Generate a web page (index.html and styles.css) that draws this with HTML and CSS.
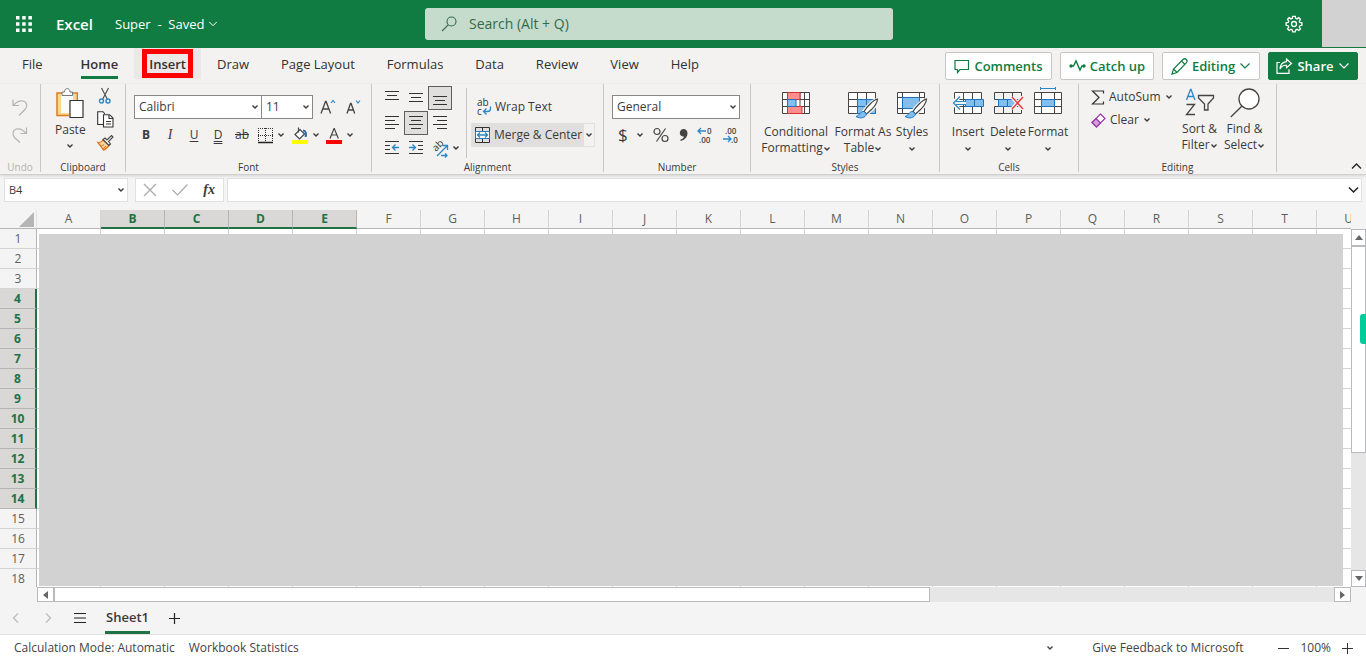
FILE: index.html
```html
<!DOCTYPE html>
<html lang="en">
<head>
<meta charset="utf-8">
<meta name="viewport" content="width=device-width, initial-scale=1">
<title>Super - Excel</title>
<link rel="stylesheet" href="styles.css">
</head>
<body>
<svg class="defs" aria-hidden="true">
  <symbol id="chev" viewBox="0 0 8 6"><path d="M1.500 1.500 4 4l2.500-2.500" fill="none" stroke="currentColor" stroke-width="1.400"/></symbol>
  <symbol id="chev-lg" viewBox="0 0 12 8"><path d="M1.500 1.500 6 6l4.500-4.500" fill="none" stroke="currentColor" stroke-width="1.200"/></symbol>
</svg>

<header class="topbar">
  <button class="plain waffle" aria-label="App launcher">
    <svg width="16" height="16" viewBox="0 0 16 16" fill="#fff"><path d="M0 0h3.500v3.500H0zM6.200 0h3.500v3.500H6.200zM12.400 0h3.500v3.500h-3.500zM0 6.200h3.500v3.500H0zM6.200 6.200h3.500v3.500H6.200zM12.400 6.200h3.500v3.500h-3.500zM0 12.400h3.500v3.500H0zM6.200 12.400h3.500v3.500H6.200zM12.400 12.400h3.500v3.500h-3.500z"/></svg>
  </button>
  <span class="brand">Excel</span>
  <button class="plain filename">Super&nbsp; -&nbsp; Saved <svg width="10" height="8"><use href="#chev-lg"/></svg></button>
  <label class="search">
    <svg width="16" height="16" viewBox="0 0 16 16" fill="none" stroke="#35694a" stroke-width="1.100"><circle cx="10.500" cy="5.500" r="4.500"/><path d="M7.200 8.800 1 15"/></svg>
    <input type="text" placeholder="Search (Alt + Q)" aria-label="Search">
  </label>
  <button class="plain gear" aria-label="Settings">
    <svg width="18" height="18" viewBox="0 0 18 18" fill="none" stroke="#fff" stroke-width="1.300"><path d="M7.700 1.300h2.600l.4 2 1.300.6 1.800-1.200 1.700 1.700-1.200 1.800.6 1.300 2 .3v2.500l-2 .4-.6 1.300 1.200 1.800-1.700 1.700-1.800-1.200-1.300.6-.4 2H7.700l-.4-2-1.300-.6-1.800 1.200-1.700-1.700 1.200-1.800-.6-1.300-2-.4V7.800l2-.3.6-1.300-1.200-1.800 1.700-1.700L6 3.900l1.300-.6z"/><circle cx="9" cy="9" r="2.500"/></svg>
  </button>
  <div class="account"></div>
</header>

<div class="tabrow">
  <nav class="tabs" aria-label="Ribbon tabs">
    <button class="tab tab-file">File</button>
    <button class="tab tab-active">Home</button>
    <button class="tab tab-hover">Insert</button>
    <button class="tab">Draw</button>
    <button class="tab">Page Layout</button>
    <button class="tab">Formulas</button>
    <button class="tab">Data</button>
    <button class="tab">Review</button>
    <button class="tab">View</button>
    <button class="tab">Help</button>
  </nav>
  <div class="actions">
    <button class="action"><svg width="16" height="16" viewBox="0 0 16 16" fill="none" stroke="currentColor" stroke-width="1.200"><path d="M1 2.500h13.500v9H6L3.500 14.500v-3H1z"/></svg>Comments</button>
    <button class="action action-catch"><svg width="17" height="14" viewBox="0 0 17 14" fill="none" stroke="currentColor" stroke-width="1.400"><path d="M2 7h2.500L7 2l4 9 2-4h2"/><circle cx="2" cy="7" r="1" fill="currentColor"/><circle cx="15" cy="7" r="1" fill="currentColor"/></svg>Catch up</button>
    <button class="action action-edit"><svg width="17" height="17" viewBox="0 0 17 17" fill="none" stroke="currentColor" stroke-width="1.200"><path d="m1 16 1.500-5L12 1.500c1-1 2.500-.8 3.300 0s1 2.300 0 3.300L6 14.500zM2.500 11 6 14.500M10.500 3l3.500 3.500"/></svg>Editing<svg class="end" width="12" height="8"><use href="#chev-lg"/></svg></button>
    <button class="action action-share"><svg width="17" height="16" viewBox="0 0 17 16" fill="none" stroke="currentColor" stroke-width="1.200"><path d="M4 4.500H1v10.800h12v-4"/><path d="M10.500 1 15.500 5.500l-5 4.200V7.300C7.500 7 5.500 8.300 4 11c.3-4 2.500-7 6.500-7.400z"/></svg>Share<svg class="end" width="12" height="8"><use href="#chev-lg"/></svg></button>
  </div>
</div>

<div class="ribbon">
  <section class="group g-undo">
    <div class="content undo">
      <button class="plain" aria-label="Undo"><svg width="16" height="18" viewBox="0 0 16 18" fill="none" stroke="#b5b3b1" stroke-width="1.200"><path d="M1 1.500v6h6M1.500 7.500C4 4 7.500 2.500 11 3c4 1 5 5.500 2 8.500l-6 6"/></svg></button>
      <button class="plain" aria-label="Redo"><svg width="16" height="18" viewBox="0 0 16 18" fill="none" stroke="#b5b3b1" stroke-width="1.200"><path d="M14.500 1.500v6h-6M14 7.500C11.500 4 8 2.500 4.500 3c-4 1-4.500 5.500-2 8.500l5.500 5"/></svg></button>
    </div>
    <h2 class="glabel muted">Undo</h2>
  </section>

  <section class="group g-clip">
    <div class="content clip">
      <button class="plain big">
        <svg width="28" height="31" viewBox="0 0 28 31" fill="none"><path d="M1.500 5.500h19V12h-7v15.500h-12z" fill="#f8d98b"/><path d="M5 6h12v6h-4v13H5z" fill="#fafafa"/><path d="M6 5H1v22.500h12M16.500 5h4.800v7" stroke="#e0791c" stroke-width="1.500"/><path d="M6 7.500V4h2.500C8.500-.5 14-.5 14 4h2.500v3.500z" fill="#fff" stroke="#777"/><path d="M14 12.500h13v17H14z" fill="#fff" stroke="#333" stroke-width="1.200"/></svg>
        <span>Paste</span>
        <svg class="lone" width="8" height="6"><use href="#chev"/></svg>
      </button>
      <div class="stack">
        <button class="plain" aria-label="Cut"><svg width="14" height="16" viewBox="0 0 14 16" fill="none"><path d="M3.500 0 9.500 11.500M10.500 0l-6 11.500" stroke="#555" stroke-width="1.200"/><circle cx="3.500" cy="13" r="2" stroke="#2b88c8" stroke-width="1.400"/><circle cx="10" cy="13" r="2" stroke="#2b88c8" stroke-width="1.400"/></svg></button>
        <button class="plain" aria-label="Copy"><svg width="17" height="17" viewBox="0 0 17 17" fill="#fff" stroke="#333" stroke-width="1.100"><path d="M6 13.500H.7V.7H6L8 3"/><path d="M6.500 3.700h6L16 7v9H6.500z"/><path d="M12 4v3.500h4M9 10.500h5M9 13h5" fill="none"/></svg></button>
        <button class="plain" aria-label="Format painter"><svg width="17" height="16" viewBox="0 0 17 16" fill="none"><path d="M1 7.500c3 .5 4-1 5-2.500l6 5.500c-1.500 1.500-3 4-5.500 4.500C5 13 3 10 1 7.500z" fill="#fbd5a0" stroke="#df7419" stroke-width="1.300"/><path d="m4 11.500 3-2M6 14l3-3" stroke="#df7419"/><path d="m6 4.500 6 6 1.500-1.500-2-2.500L16 2l-1.500-1.500L10 5 8 3z" fill="#fff" stroke="#444" stroke-width="1.100"/></svg></button>
      </div>
    </div>
    <h2 class="glabel">Clipboard</h2>
  </section>

  <section class="group g-font">
    <div class="content font">
      <div class="line">
        <div class="combo w-font"><select aria-label="Font"><option>Calibri</option></select><svg width="8" height="6"><use href="#chev"/></svg></div>
        <div class="combo w-size"><select aria-label="Font size"><option>11</option></select><svg width="8" height="6"><use href="#chev"/></svg></div>
        <button class="plain grow" aria-label="Increase font size"><svg width="16" height="16" viewBox="0 0 16 16" fill="none"><path d="m1 14.500 4.500-12h.6l4.500 12M2.700 10h6.300" stroke="#444" stroke-width="1.300"/><path d="M11 4l2-2.500L15 4" stroke="#2b88c8" stroke-width="1.200"/></svg></button>
        <button class="plain shrink" aria-label="Decrease font size"><svg width="16" height="16" viewBox="0 0 16 16" fill="none"><path d="m2 14.500 3.500-10h.6l3.600 10M3.300 11h5" stroke="#444" stroke-width="1.300"/><path d="M11 1.500 13 4l2-2.500" stroke="#2b88c8" stroke-width="1.200"/></svg></button>
      </div>
      <div class="line marks">
        <button class="plain mk"><b>B</b></button>
        <button class="plain mk"><i>I</i></button>
        <button class="plain mk mk-u">U</button>
        <button class="plain mk mk-d">D</button>
        <button class="plain mk mk-s">ab</button>
        <button class="plain pick" aria-label="Borders"><svg width="15" height="15" viewBox="0 0 15 15" fill="none" stroke="#333"><path d="M0 .5h15M0 7.500h15M.5 0v14M7.500 0v14M14.500 0v14" stroke-dasharray="1 1" shape-rendering="crispEdges"/><path d="M0 14.500h15" stroke="#222" stroke-width="1.500"/></svg><svg width="8" height="6"><use href="#chev"/></svg></button>
        <button class="plain pick" aria-label="Fill color"><svg width="16" height="17" viewBox="0 0 16 17" fill="none"><path d="m3 7.500 5-5 4.500 4.500-5 5zM6.500.5v5" stroke="#444" stroke-width="1.200" fill="#fff"/><path d="M11 3.500c3 0 3.500 3 2.500 6.500" stroke="#2b6cb0" stroke-width="2"/><path d="M0 13h16v4H0z" fill="#ff0"/></svg><svg width="8" height="6"><use href="#chev"/></svg></button>
        <button class="plain pick" aria-label="Font color"><svg width="16" height="17" viewBox="0 0 16 17" fill="none"><path d="M4 11.500 8 1.500h.3l4 10M5.500 8h5.300" stroke="#444" stroke-width="1.200"/><path d="M0 13h16v4H0z" fill="#f00"/></svg><svg width="8" height="6"><use href="#chev"/></svg></button>
      </div>
    </div>
    <h2 class="glabel">Font</h2>
  </section>

  <section class="group g-align">
    <div class="content align">
      <div class="aligns">
        <button class="plain sq" aria-label="Top align"><svg width="14" height="14"><path d="M0 .5h14M2 4.500h10M0 8.500h14"/></svg></button>
        <button class="plain sq" aria-label="Middle align"><svg width="14" height="14"><path d="M0 2.500h14M2 6.500h10M0 10.500h14"/></svg></button>
        <button class="plain sq on" aria-label="Bottom align"><svg width="14" height="14"><path d="M0 5.500h14M2 9.500h10M0 13.500h14"/></svg></button>
        <button class="plain sq" aria-label="Align left"><svg width="14" height="14"><path d="M0 .5h14M0 4.500h10M0 8.500h14M0 12.500h10"/></svg></button>
        <button class="plain sq on" aria-label="Center"><svg width="14" height="14"><path d="M0 .5h14M2 4.500h10M0 8.500h14M2 12.500h10"/></svg></button>
        <button class="plain sq" aria-label="Align right"><svg width="14" height="14"><path d="M0 .5h14M4 4.500h10M0 8.500h14M4 12.500h10"/></svg></button>
        <button class="plain sq" aria-label="Decrease indent"><svg width="14" height="14"><path d="M0 .5h14M0 4.500h5M0 8.500h5M0 12.500h14"/><path class="blue" d="M14 6.500H8M10.500 3.500l-3 3 3 3"/></svg></button>
        <button class="plain sq" aria-label="Increase indent"><svg width="14" height="14"><path d="M0 .5h14M9 4.500h5M9 8.500h5M0 12.500h14"/><path class="blue" d="M0 6.500h6M3.500 3.500l3 3-3 3"/></svg></button>
        <button class="plain sq orient" aria-label="Orientation"><svg width="17" height="17" viewBox="0 0 17 17"><text x="4" y="12" transform="rotate(-45 4 12)" class="ab">ab</text><path class="blue" d="M5 16 15.500 5.500M11 5.500h4.500V10M9 15.500h6M13 13.500l2 2-2 2"/></svg><svg width="8" height="6"><use href="#chev"/></svg></button>
      </div>
      <div class="merges">
        <button class="plain wrap"><svg width="16" height="16" viewBox="0 0 16 16"><text x="0" y="7" class="ab">ab</text><text x="0" y="16" class="ab">c</text><path class="blue" d="M13.500 7.500v2c0 2-1 3-3 3H7M9.500 9.500l-3 3 3 3"/></svg>Wrap Text</button>
        <div class="split">
          <button class="plain merge"><svg width="15" height="16" viewBox="0 0 15 16" fill="none"><path d="M.5.500h14v15H.5zM7.500 0v4M7.500 12v4" stroke="#333"/><path d="M.5 4.500h14v7H.5z" fill="#fff" stroke="#1f7ec4"/><path class="blue" d="M2.500 8h10M5 5.500 2.500 8 5 10.500M10 5.500 12.500 8 10 10.500"/></svg>Merge &amp; Center</button>
          <button class="plain more" aria-label="Merge options"><svg width="8" height="6"><use href="#chev"/></svg></button>
        </div>
      </div>
    </div>
    <h2 class="glabel">Alignment</h2>
  </section>

  <section class="group g-num">
    <div class="content font">
      <div class="combo w-font"><select aria-label="Number format"><option>General</option></select><svg width="8" height="6"><use href="#chev"/></svg></div>
      <div class="line nums">
        <button class="plain dollar">$<svg width="8" height="6"><use href="#chev"/></svg></button>
        <button class="plain" aria-label="Percent"><svg width="16" height="16" viewBox="0 0 16 16" fill="none" stroke="#444" stroke-width="1.200"><circle cx="4" cy="4.500" r="3"/><circle cx="12" cy="11.500" r="3"/><path d="M12.500 1.500 3.500 14.500"/></svg></button>
        <button class="plain" aria-label="Comma style"><svg width="9" height="14" viewBox="0 0 9 14"><path d="M4.500 1C7 1 8.500 2.800 8.500 5.300c0 4-3 6.700-7 7.700v-1.500c2-.5 3.200-1.500 3.500-3C3 9 .8 7.500.8 5 .8 2.700 2.400 1 4.500 1z" fill="#444"/></svg></button>
        <button class="plain" aria-label="Increase decimal"><svg width="16" height="16" viewBox="0 0 16 16"><text x="10" y="7" class="dec">0</text><text x="2" y="16" class="dec">.00</text><path class="blue" d="M9 4H1M4 1 1 4l3 3"/></svg></button>
        <button class="plain" aria-label="Decrease decimal"><svg width="16" height="16" viewBox="0 0 16 16"><text x="2" y="7" class="dec">.00</text><text x="8" y="16" class="dec">.0</text><path class="blue" d="M0 12h8M5 9l3 3-3 3"/></svg></button>
      </div>
    </div>
    <h2 class="glabel">Number</h2>
  </section>

  <section class="group g-styles">
    <div class="content tiles">
      <button class="plain tile w-cond">
        <svg width="30" height="26" viewBox="0 0 30 26" fill="none"><path d="M1.500 1.500h27v21h-27zM6.500 1.500v21M23.500 1.500v21M19 1.500v21M1.500 8.500h27M1.500 15.500h27" fill="#fff" stroke="#444"/><path d="M6.500 1.500H19v7H6.500zM6.500 15.500H21v7H6.500z" fill="#ff8f8f" stroke="#e02f2f"/><path d="M6.500 8.500H15v7H6.500z" fill="#83beec" stroke="#1a73c0"/></svg>
        <span>Conditional<br>Formatting<svg width="8" height="6"><use href="#chev"/></svg></span>
      </button>
      <button class="plain tile w-fmt">
        <svg width="30" height="28" viewBox="0 0 30 28" fill="none"><path d="M.5 1.500h27v21H.5zM9.500 1.500v21M18.500 1.500v21M.5 8.500h27M.5 15.500h27" fill="#fff" stroke="#444"/><path d="M9.500 8.500h18v14h-18zM18.500 8.500v14M9.500 15.500h18" fill="#83beec" stroke="#1a73c0"/><path d="M30 8.500c-4 1-11 7-14 12l2.500 2.500c5-4 11-10 11.500-14.500z" fill="#fff" stroke="#f3f2f1" stroke-width="4"/><path d="M29.500 8c-4 1-10.500 7.500-13.500 12.500l2.500 2.500c5-4 11-10.500 11-15z" fill="#fff" stroke="#444" stroke-width="1.200"/><path d="M16 20.500c-4-.5-4 4-8 5 4 2.500 9.500 1.500 10.500-2.500z" fill="#83beec" stroke="#1a73c0"/></svg>
        <span>Format As<br>Table<svg width="8" height="6"><use href="#chev"/></svg></span>
      </button>
      <button class="plain tile w-sty">
        <svg width="30" height="28" viewBox="0 0 30 28" fill="none"><path d="M.5 1.500h27v21H.5zM5.500 1.500v21M22.500 1.500v21M.5 6.500h27M.5 17.500h27" fill="#fff" stroke="#444"/><path d="M5.500 6.500h17v11h-17z" fill="#83beec" stroke="#1a73c0"/><path d="M30 8.500c-4 1-11 7-14 12l2.500 2.500c5-4 11-10 11.500-14.500z" fill="#fff" stroke="#f3f2f1" stroke-width="4"/><path d="M29.500 8c-4 1-10.500 7.500-13.500 12.500l2.500 2.500c5-4 11-10.500 11-15z" fill="#fff" stroke="#444" stroke-width="1.200"/><path d="M16 20.500c-4-.5-4 4-8 5 4 2.500 9.500 1.500 10.500-2.500z" fill="#83beec" stroke="#1a73c0"/></svg>
        <span>Styles<br><svg width="8" height="6"><use href="#chev"/></svg></span>
      </button>
    </div>
    <h2 class="glabel">Styles</h2>
  </section>

  <section class="group g-cells">
    <div class="content tiles">
      <button class="plain tile w-cell">
        <svg width="32" height="26" viewBox="0 0 32 26" fill="none"><path d="M2.500 1.500h27v21h-27zM11.500 1.500v21M20.500 1.500v21M2.500 8.500h27M2.500 15.500h27" fill="#fff" stroke="#444"/><path d="M13.500 8.500h18v7h-18zM22.500 8.500v7" fill="#83beec" stroke="#1a73c0"/><path d="M0 12h14M8 5l-7 7 7 7" stroke="#f3f2f1" stroke-width="4"/><path d="M14 10.500H4M14 13.500H4M8 5.500 1.500 12 8 18.500" stroke="#2b88c8" stroke-width="1.200"/></svg>
        <span>Insert<br><svg width="8" height="6"><use href="#chev"/></svg></span>
      </button>
      <button class="plain tile w-cell">
        <svg width="32" height="26" viewBox="0 0 32 26" fill="none"><path d="M2.500 8.500v-7h27v7M2.500 15.500v7h27v-7M11.500 1.500v21M20.500 1.500v21M2.500 8.500h27M2.500 15.500h27" stroke="#444"/><path d="M6.500 8.500h15l3 3.500-3 3.500h-15zM15.500 8.500v7" fill="#83beec" stroke="#1a73c0"/><path d="m20 6 11 12M31 6 20 18" stroke="#f3f2f1" stroke-width="4"/><path d="m20 6 11 12M31 6 20 18" stroke="#e8383d" stroke-width="1.400"/></svg>
        <span>Delete<br><svg width="8" height="6"><use href="#chev"/></svg></span>
      </button>
      <button class="plain tile w-cell tile-tall">
        <svg width="28" height="28" viewBox="0 0 28 28" fill="none"><path d="M.5 5.500h27v21H.5zM7.500 5.500v21M20.500 5.500v21M.5 12.500h27M.5 19.500h27" fill="#fff" stroke="#444"/><path d="M7.500 12.500h13v7h-13z" fill="#83beec" stroke="#1a73c0"/><path d="M6.500 0v3M21.500 0v3M6.500 1.500h15" stroke="#2b88c8"/></svg>
        <span>Format<br><svg width="8" height="6"><use href="#chev"/></svg></span>
      </button>
    </div>
    <h2 class="glabel">Cells</h2>
  </section>

  <section class="group g-edit">
    <div class="content editing">
      <div class="sums">
        <button class="plain"><svg width="14" height="15" viewBox="0 0 14 15" fill="none" stroke="#333" stroke-width="1.200"><path d="M12.500 3.500V1H1.500L8 7.500 1.500 14h11v-2.500"/></svg>AutoSum <svg width="8" height="6"><use href="#chev"/></svg></button>
        <button class="plain"><svg width="15" height="15" viewBox="0 0 15 15" fill="none" stroke="#9537a5" stroke-width="1.200"><path d="M9.500 1 14 5.500 5.500 14 1 9.500z" fill="#fff"/><path d="M5 5.500 9.500 10l-4 4L1 9.500z" fill="#d79ddf"/></svg>Clear <svg width="8" height="6"><use href="#chev"/></svg></button>
      </div>
      <button class="plain tile w-sort">
        <svg width="30" height="28" viewBox="0 0 30 28" fill="none" stroke-width="1.300"><path d="M1.500 12 5.500 1.500H6L10 12M3 8.500h5.500" stroke="#2b88c8"/><path d="M1.500 16.500h8l-8 10h8.500M13.500 7.500h15v2.500L23 16v6h-3.500v-6L13.500 10z" stroke="#444"/></svg>
        <span>Sort &amp;<br>Filter<svg width="8" height="6"><use href="#chev"/></svg></span>
      </button>
      <button class="plain tile w-sort">
        <svg width="30" height="30" viewBox="0 0 30 30" fill="none" stroke="#444" stroke-width="1.300"><circle cx="19" cy="11" r="10" fill="#fff"/><path d="M12 18 .8 29"/></svg>
        <span>Find &amp;<br>Select<svg width="8" height="6"><use href="#chev"/></svg></span>
      </button>
    </div>
    <h2 class="glabel">Editing</h2>
  </section>
  <button class="plain collapse" aria-label="Collapse ribbon"><svg width="11" height="8" viewBox="0 0 11 8" fill="none" stroke="#222" stroke-width="1.300"><path d="M1 6.500 5.500 2 10 6.500"/></svg></button>
</div>

<div class="formulabar">
  <div class="combo namebox"><select aria-label="Name box"><option>B4</option></select><svg width="8" height="6"><use href="#chev"/></svg></div>
  <div class="fxbox">
    <button class="plain" aria-label="Cancel"><svg width="12" height="12" viewBox="0 0 12 12" stroke="#aaa" stroke-width="1.200"><path d="m0 0 12 12M12 0 0 12"/></svg></button>
    <button class="plain" aria-label="Enter"><svg width="16" height="12" viewBox="0 0 16 12" fill="none" stroke="#aaa" stroke-width="1.200"><path d="m.5 6 5 5L15.500.5"/></svg></button>
    <button class="plain fx">fx</button>
  </div>
  <label class="formula"><input type="text" aria-label="Formula bar"><svg width="11" height="8" viewBox="0 0 11 8" fill="none" stroke="#222" stroke-width="1.500"><path d="M1 1.500 5.500 6 10 1.500"/></svg></label>
</div>

<main class="workarea">
  <div class="sheet">
    <table>
      <thead><tr id="cols"><th class="corner"><svg width="15" height="15"><path d="M15 0v15H0z" fill="#b5b5b5"/></svg></th></tr></thead>
      <tbody id="rows"></tbody>
    </table>
    <div class="shade"></div>
  </div>
  <div class="vscroll">
    <button class="plain arrow" aria-label="Scroll up"><svg width="8" height="5"><path d="M0 5 4 0l4 5z" fill="#666"/></svg></button>
    <div class="vthumb"></div>
    <button class="plain arrow" aria-label="Scroll down"><svg width="8" height="5"><path d="M0 0h8L4 5z" fill="#666"/></svg></button>
    <div class="handle"></div>
  </div>
</main>
<div class="hscroll">
  <button class="plain arrow" aria-label="Scroll left"><svg width="5" height="8"><path d="M5 0v8L0 4z" fill="#666"/></svg></button>
  <div class="hthumb"></div>
  <button class="plain arrow" aria-label="Scroll right"><svg width="5" height="8"><path d="M0 0v8l5-4z" fill="#666"/></svg></button>
</div>

<div class="sheetbar">
  <button class="plain" aria-label="Previous sheet"><svg width="7" height="10" viewBox="0 0 7 10" fill="none" stroke="#bbb" stroke-width="1.200"><path d="M6 .5 1.500 5 6 9.500"/></svg></button>
  <button class="plain" aria-label="Next sheet"><svg width="7" height="10" viewBox="0 0 7 10" fill="none" stroke="#bbb" stroke-width="1.200"><path d="M1 .5 5.500 5 1 9.500"/></svg></button>
  <button class="plain" aria-label="All sheets"><svg width="12" height="10" viewBox="0 0 12 10" stroke="#222"><path d="M0 .5h12M0 5h12M0 9.500h12"/></svg></button>
  <button class="plain sheettab">Sheet1</button>
  <button class="plain" aria-label="New sheet"><svg width="11" height="11" viewBox="0 0 11 11" stroke="#222" stroke-width="1.200"><path d="M5.500 0v11M0 5.500h11"/></svg></button>
</div>

<footer class="status">
  <span>Calculation Mode: Automatic</span>
  <span>Workbook Statistics</span>
  <button class="plain statmore" aria-label="Status options"><svg width="8" height="6"><use href="#chev"/></svg></button>
  <a href="#feedback">Give Feedback to Microsoft</a>
  <button class="plain zoomout" aria-label="Zoom out"><svg width="11" height="11" viewBox="0 0 11 11" stroke="#333"><path d="M0 5.500h11"/></svg></button>
  <span>100%</span>
  <button class="plain zoomin" aria-label="Zoom in"><svg width="11" height="11" viewBox="0 0 11 11" stroke="#333"><path d="M5.500 0v11M0 5.500h11"/></svg></button>
</footer>
<script src="grid.js"></script>
</body>
</html>
```
FILE: grid.js
```js
// Builds the column and row headers; the selected range is B4:E14.
const letters = "ABCDEFGHIJKLMNOPQRSTU".split("");
const cols = document.getElementById("cols");
letters.forEach((letter) => {
  const th = document.createElement("th");
  th.scope = "col";
  th.textContent = letter;
  if ("BCDE".includes(letter)) th.className = "picked";
  cols.appendChild(th);
});
const rows = document.getElementById("rows");
for (let n = 1; n <= 18; n++) {
  const tr = rows.insertRow();
  const th = document.createElement("th");
  th.scope = "row";
  th.textContent = n;
  if (n >= 4 && n <= 14) th.className = "picked";
  tr.appendChild(th);
  letters.forEach(() => tr.insertCell());
}
```
FILE: styles.css
```css
* { box-sizing: border-box; }

body {
  margin: 0;
  height: 100vh;
  display: flex;
  flex-direction: column;
  overflow: hidden;
  background: #f4f4f4;
  color: #3b3a39;
  font-family: "Open Sans", "Noto Sans", sans-serif;
  font-size: 12px;
  line-height: 16px;
}

svg { flex: none; overflow: visible; }
.defs { display: none; }

button, input, select { font: inherit; color: inherit; }

.plain {
  display: flex;
  align-items: center;
  justify-content: center;
  padding: 0;
  border: 0;
  background: none;
  white-space: nowrap;
}

/* Title bar */
.topbar {
  flex: none;
  height: 48px;
  display: flex;
  align-items: center;
  background: #107c41;
  color: #fff;
}
.waffle { width: 48px; }
.brand { width: 67px; padding-left: 8px; font-size: 15px; font-weight: 600; }
.filename { width: 310px; justify-content: flex-start; gap: 4px; font-size: 13px; }
.search {
  width: 468px;
  height: 32px;
  display: flex;
  align-items: center;
  gap: 12px;
  padding: 0 16px;
  background: #c5dccd;
  border-radius: 3px;
}
.search input { flex: 1; min-width: 0; padding: 0; border: 0; outline: 0; background: none; font-size: 14px; }
.search input::placeholder { color: #35694a; opacity: 1; }
.gear { margin-left: auto; width: 56px; }
.account { align-self: stretch; width: 44px; background: #d2d2d2; border-bottom: 1px solid #107c41; }

/* Tabs */
.tabrow {
  flex: none;
  height: 36px;
  display: flex;
  justify-content: space-between;
  background: #f3f2f1;
}
.tabs { display: flex; height: 31px; padding-left: 6px; }
.tab {
  position: relative;
  padding: 0 16px;
  border: 0;
  background: none;
  font-size: 13px;
  color: #323130;
}
.tab-file { margin-right: 6px; }
.tab-active { font-weight: 600; }
.tab-active::after {
  content: "";
  position: absolute;
  left: 16px;
  right: 16px;
  bottom: 0;
  height: 3px;
  background: #107c41;
}
.tab-hover { padding: 0 15px; background: #ebe9e8; font-weight: 600; }
.tab-hover::after {
  content: "";
  position: absolute;
  inset: 1px 8px 1px 8px;
  border: 5px solid #f00;
}
.actions { display: flex; gap: 8px; padding: 4px 8px 0 0; }
.action {
  height: 28px;
  display: flex;
  align-items: center;
  justify-content: center;
  gap: 4px;
  width: 107px;
  padding: 0;
  border: 1px solid #c8c6c4;
  border-radius: 2px;
  background: #fff;
  color: #107c41;
  font-size: 13px;
  font-weight: 600;
}
.action-catch { width: 94px; }
.action-edit { width: 98px; }
.action-share { width: 90px; background: #107c41; border-color: #107c41; color: #fff; }

/* Ribbon */
.ribbon {
  flex: none;
  height: 91px;
  display: flex;
  padding-bottom: 2px;
  background: #f3f2f1;
  border-bottom: 1px solid #d2d0ce;
  box-shadow: 0 1px 3px #0002;
}
.group { display: flex; flex-direction: column; border-right: 1px solid #c8c6c4; }
.g-undo { width: 41px; }
.g-clip { width: 85px; }
.g-font { width: 246px; }
.g-align { width: 232px; }
.g-num { width: 147px; }
.g-styles { width: 189px; }
.g-cells { width: 139px; }
.g-edit { width: 198px; }
.content { flex: 1; min-height: 0; }
.glabel { margin: 0; height: 12px; font-size: 10px; line-height: 14px; font-weight: 400; text-align: center; }
.muted { color: #b5b3b1; }
.undo { display: flex; flex-direction: column; align-items: center; gap: 10px; padding-top: 14px; }
.clip { display: flex; gap: 11px; padding: 4px 0 0 14px; }
.big { flex-direction: column; justify-content: flex-start; }
.big span { padding-top: 3px; }
.lone { margin-top: 5px; }
.stack { display: flex; flex-direction: column; align-items: center; gap: 7px; }

.font { padding: 11px 0 0 8px; }
.line { display: flex; align-items: center; }
.combo {
  display: grid;
  grid-template-columns: 1fr 10px;
  align-items: center;
  height: 24px;
  border: 1px solid #8a8886;
  background: #fff;
}
.combo select {
  grid-area: 1 / 1 / 2 / 3;
  height: 100%;
  padding: 0 4px;
  border: 0;
  appearance: none;
  background: none;
}
.combo svg { grid-area: 1 / 2; pointer-events: none; }
.w-font { width: 128px; }
.w-size { width: 51px; border-left: 0; }
.grow { margin-left: 7px; }
.shrink { margin-left: 9px; }
.marks { height: 24px; margin-top: 4px; }
.mk { width: 24px; height: 20px; }
.mk i { font-family: "Liberation Serif", serif; font-size: 14px; }
.mk-u { text-decoration: underline; text-underline-offset: 2px; }
.mk-d { text-decoration: underline double; text-underline-offset: 2px; }
.mk-s { text-decoration: line-through; }
.pick { width: 34px; gap: 4px; justify-content: flex-start; }
.mk-s + .pick { margin-left: 4px; }

.align { display: flex; padding: 2px 0 0 8px; }
.aligns { display: grid; grid-template-columns: repeat(3, 24px); grid-auto-rows: 24px; gap: 1px 0; width: 86px; }
.sq { border: 1px solid transparent; }
.sq.on { background: #e1dfdd; border-color: #605e5c; }
.sq svg path { stroke: #333; fill: none; }
.blue, .sq svg .blue { stroke: #2b88c8; stroke-width: 1.3; fill: none; }
.sq .lone, .orient use { color: #333; }
.orient { width: 34px; gap: 3px; justify-content: flex-start; padding-left: 3px; }
.ab { font-family: "Open Sans", sans-serif; font-size: 10px; fill: #333; }
.merges { margin-top: 2px; height: 70px; padding: 7px 0 0 4px; border-left: 1px solid #c8c6c4; }
.wrap { height: 24px; padding-left: 6px; gap: 2px; }
.split { display: flex; height: 24px; margin-top: 4px; background: #e1dfdd; }
.merge { padding: 0 1px 0 4px; gap: 4px; }
.more { width: 12px; background: #f3f2f1; border: 1px solid #e1dfdd; }

.nums { height: 24px; margin-top: 4px; padding: 0 1px 0 6px; justify-content: space-between; width: 128px; }
.dollar { gap: 8px; font-size: 17px; }
.dec { font-family: "Open Sans", sans-serif; font-size: 8px; font-weight: 600; fill: #444; }

.tiles { display: flex; padding: 7px 0 0 8px; }
.tile { flex-direction: column; justify-content: flex-start; height: 65px; }
.tile > span { margin-top: auto; }
.tile-tall { height: 69px; margin-top: -4px; }
.w-cond { width: 74px; }
.w-fmt { width: 60px; }
.w-sty { width: 38px; }
.w-cell { width: 40px; }
.editing { display: flex; align-items: flex-start; padding: 4px 0 0 12px; }
.sums { width: 86px; display: flex; flex-direction: column; align-items: flex-start; gap: 7px; padding-top: 1px; }
.sums .plain { gap: 4px; }
.w-sort { width: 45px; }
.collapse { margin: auto 4px 0 auto; height: 12px; }

/* Formula bar */
.formulabar { flex: none; height: 35px; display: flex; align-items: flex-start; gap: 3px; padding: 3px 4px 0; }
.namebox { width: 124px; margin-right: 4px; border-color: #e1e1e1; font-size: 11px; }
.fxbox {
  width: 89px;
  height: 24px;
  display: flex;
  align-items: center;
  justify-content: space-between;
  padding: 0 8px;
  background: #fff;
  border: 1px solid #e1e1e1;
}
.fx { font: italic 700 14px/16px "Liberation Serif", serif; }
.formula {
  flex: 1;
  height: 24px;
  display: flex;
  align-items: center;
  padding-right: 2px;
  background: #fff;
  border: 1px solid #e1e1e1;
}
.formula input { flex: 1; min-width: 0; border: 0; outline: 0; }

/* Worksheet */
.workarea { flex: 1; min-height: 0; display: flex; }
.sheet { position: relative; flex: 1; min-width: 0; overflow: hidden; background: #fff; }
.sheet table { width: 1381px; table-layout: fixed; border-collapse: separate; border-spacing: 0; }
.sheet th, .sheet td { height: 20px; padding: 0; border: 0 solid #d4d4d4; border-width: 0 1px 1px 0; }
.sheet th { background: #f4f4f4; color: #605e5c; font-weight: 400; line-height: 18px; }
.sheet thead th { width: 64px; height: 19px; line-height: 16px; border-bottom-color: #b5b5b5; }
.sheet thead .corner { width: 37px; border-right-color: #e1e1e1; }
.corner svg { display: block; margin-left: 19px; }
.sheet tbody th { border-right-color: #b5b5b5; }
.sheet th.picked { background: #d9d8d6; color: #217346; font-weight: 700; }
.sheet thead th.picked { border-bottom: 2px solid #217346; border-right-color: #b5b5b5; }
.sheet tbody th.picked { border-right: 2px solid #217346; border-bottom-color: #b5b5b5; }
.shade { position: absolute; inset: 24px 8px 1px 39px; background: #d2d2d2; }
.vscroll {
  position: relative;
  width: 15px;
  margin-top: 19px;
  display: flex;
  flex-direction: column;
  background: #e6e6e6;
}
.arrow { flex: none; background: #fff; border: 1px solid #b8babd; }
.vscroll .arrow { height: 17px; }
.vthumb { height: 207px; background: #fff; border: 1px solid #b8babd; }
.vthumb + .arrow { margin-top: auto; }
.handle {
  position: absolute;
  top: 85px;
  right: 0;
  width: 6px;
  height: 30px;
  border-radius: 3px 0 0 3px;
  background: #00cc99;
}
.hscroll { flex: none; height: 15px; display: flex; margin: 0 15px 0 37px; background: #e6e6e6; }
.hscroll .arrow { width: 17px; }
.hthumb { width: 876px; background: #fff; border: 1px solid #b8babd; }
.hthumb + .arrow { margin-left: auto; }

/* Sheet tabs and status */
.sheetbar { flex: none; height: 32px; display: flex; align-items: center; gap: 25px; padding-left: 12px; }
.sheetbar .plain:first-child { margin-right: 1px; }
.sheetbar .plain:nth-child(2) { margin-right: -3px; }
.sheettab { height: 32px; margin: 0 -6px; padding: 0 1px; border-bottom: 3px solid #217346; font-size: 13px; font-weight: 600; }
.status {
  flex: none;
  height: 23px;
  display: flex;
  align-items: center;
  padding: 4px 13px 0 14px;
  background: #fff;
  border-top: 1px solid #e1e1e1;
  gap: 14px;
  color: #444;
}
.statmore { margin-left: auto; }
.status a { margin-left: 24px; color: inherit; text-decoration: none; }
.zoomout { margin-left: 21px; }
.status .zoomout + span { margin: 0 -3px; }
```
